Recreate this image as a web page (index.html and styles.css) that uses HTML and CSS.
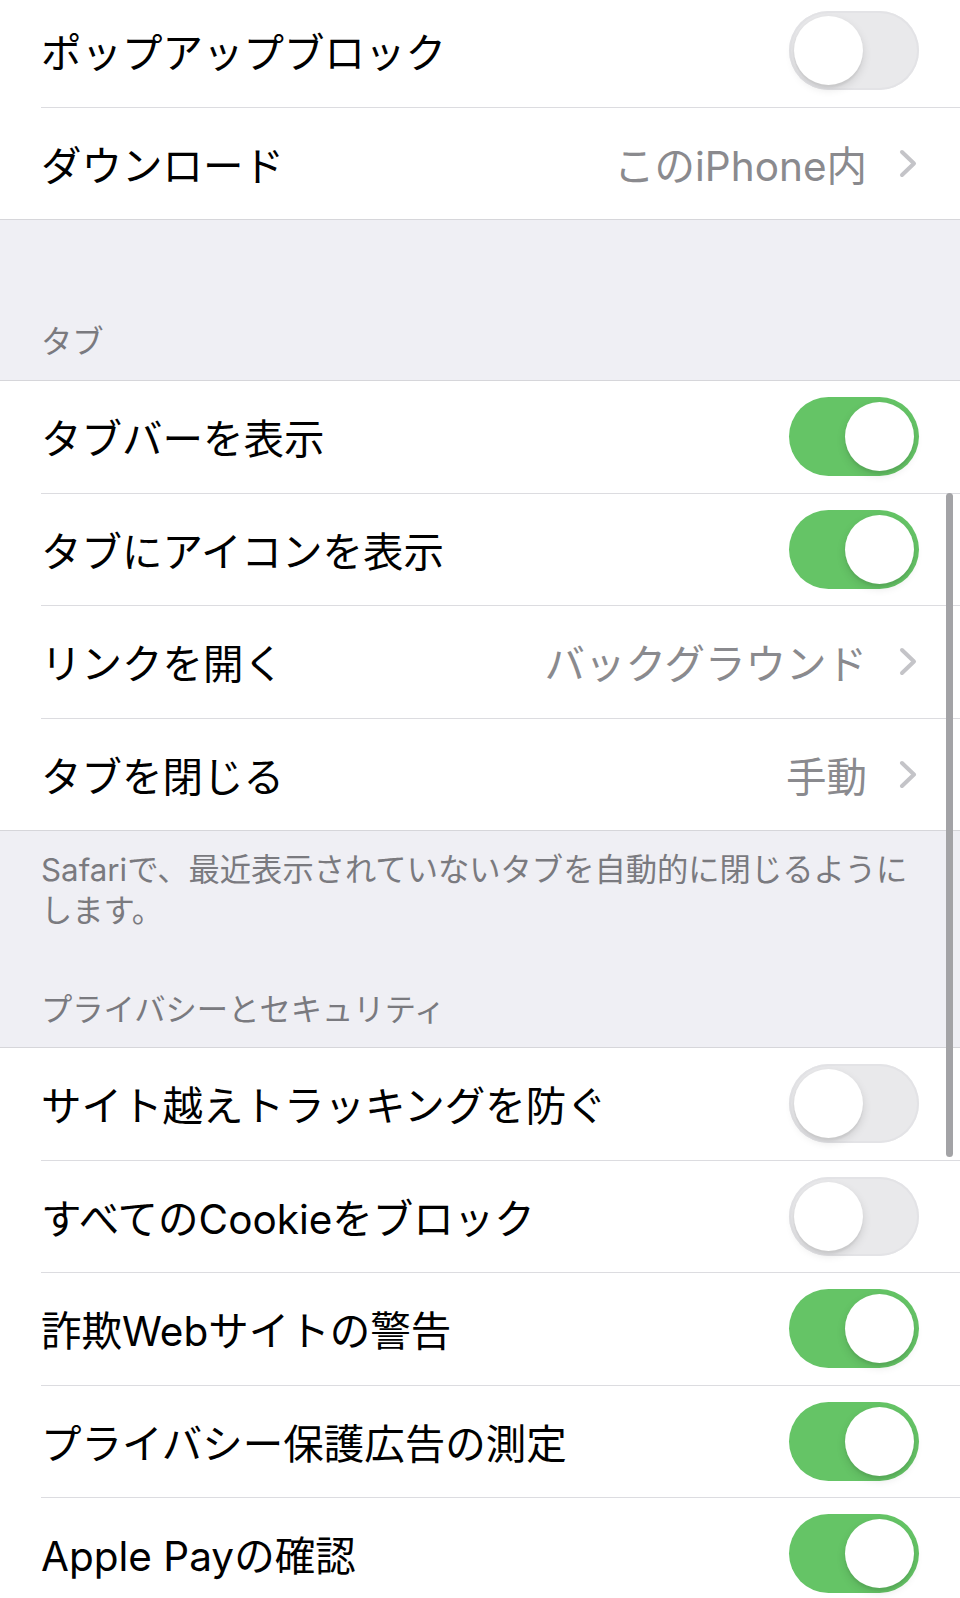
FILE: index.html
```html
<!DOCTYPE html>
<html lang="ja">
<head>
    <meta charset="utf-8">
    <title>Safari</title>
    <link rel="stylesheet" href="styles.css">
</head>
<body>
    <div class="screen">
        <div class="group">
            <div class="row">
                <span class="label">ポップアップブロック</span>
                <span class="toggle"><span class="knob"></span></span>
            </div>
            <div class="row">
                <span class="label">ダウンロード</span>
                <span class="value">このiPhone内</span>
                <svg class="chevron" width="18" height="29" viewBox="0 0 18 29"><polyline points="3,3 15,14.5 3,26" /></svg>
            </div>
        </div>

        <div class="header header-first">タブ</div>
        <div class="group">
            <div class="row">
                <span class="label">タブバーを表示</span>
                <span class="toggle on"><span class="knob"></span></span>
            </div>
            <div class="row">
                <span class="label">タブにアイコンを表示</span>
                <span class="toggle on"><span class="knob"></span></span>
            </div>
            <div class="row">
                <span class="label">リンクを開く</span>
                <span class="value">バックグラウンド</span>
                <svg class="chevron" width="18" height="29" viewBox="0 0 18 29"><polyline points="3,3 15,14.5 3,26" /></svg>
            </div>
            <div class="row">
                <span class="label">タブを閉じる</span>
                <span class="value">手動</span>
                <svg class="chevron" width="18" height="29" viewBox="0 0 18 29"><polyline points="3,3 15,14.5 3,26" /></svg>
            </div>
        </div>
        <div class="footer">Safariで、最近表示されていないタブを自動的に閉じるようにします。</div>

        <div class="header">プライバシーとセキュリティ</div>
        <div class="group">
            <div class="row">
                <span class="label">サイト越えトラッキングを防ぐ</span>
                <span class="toggle"><span class="knob"></span></span>
            </div>
            <div class="row">
                <span class="label">すべてのCookieをブロック</span>
                <span class="toggle"><span class="knob"></span></span>
            </div>
            <div class="row">
                <span class="label">詐欺Webサイトの警告</span>
                <span class="toggle on"><span class="knob"></span></span>
            </div>
            <div class="row">
                <span class="label">プライバシー保護広告の測定</span>
                <span class="toggle on"><span class="knob"></span></span>
            </div>
            <div class="row">
                <span class="label">Apple Payの確認</span>
                <span class="toggle on"><span class="knob"></span></span>
            </div>
        </div>

        <div class="scrollbar"></div>
    </div>
</body>
</html>
```

FILE: styles.css
```css
html, body
{
    margin: 0;
    padding: 0;
    background-color: #efeff4;
    overflow: hidden;
}
body
{
    font-family: Inter, "Noto Sans CJK JP", sans-serif;
    color: #000;
}
.screen
{
    position: relative;
    margin-top: -6px;
}
.group
{
    background-color: #fff;
    border-top: 1px solid #d6d6da;
    border-bottom: 1px solid #d6d6da;
}
.row
{
    display: flex;
    align-items: center;
    height: 111.5px;
    margin-left: 41px;
    padding-right: 41px;
    border-bottom: 1px solid #dcdce0;
}
.row:last-child
{
    border-bottom: none;
}
.label
{
    flex: 1;
    font-size: 40.5px;
    white-space: nowrap;
}
.value
{
    font-size: 40.5px;
    color: #8a8a8e;
    white-space: nowrap;
}
.chevron
{
    margin-left: 32px;
    margin-right: 2px;
    fill: none;
    stroke: #c4c4c8;
    stroke-width: 4;
    stroke-linecap: round;
    stroke-linejoin: round;
}
.toggle
{
    display: flex;
    align-items: center;
    box-sizing: border-box;
    width: 130px;
    height: 79px;
    padding: 5px;
    border-radius: 40px;
    background-color: #e9e9eb;
    box-shadow: inset 0 0 0 2px #e3e3e6;
}
.toggle.on
{
    justify-content: flex-end;
    background-color: #65c466;
    box-shadow: none;
}
.knob
{
    width: 69px;
    height: 69px;
    border-radius: 50%;
    background-color: #fff;
    box-shadow: 0 4px 10px rgba(0, 0, 0, 0.12), 0 3px 2px rgba(0, 0, 0, 0.05);
}
.header
{
    padding: 58px 41px 17px;
    font-size: 31.3px;
    line-height: 40px;
    color: #7a7a7f;
}
.header-first
{
    padding-top: 102px;
    padding-bottom: 18px;
}
.footer
{
    padding: 19px 41px 0;
    font-size: 31.3px;
    line-height: 41px;
    color: #7a7a7f;
}
.scrollbar
{
    position: absolute;
    top: 499px;
    right: 7px;
    width: 7px;
    height: 664px;
    border-radius: 4px;
    background-color: #a3a3a6;
}
```
